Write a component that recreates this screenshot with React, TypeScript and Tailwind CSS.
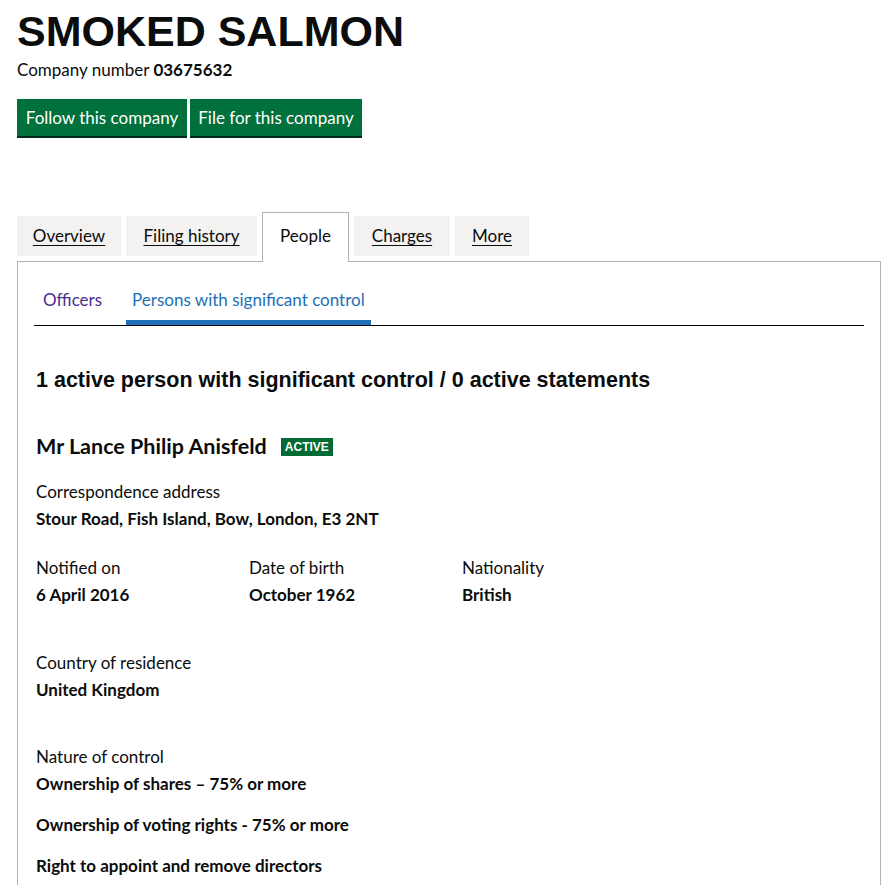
import React from "react";

const body = "font-['Lato','Liberation_Sans',sans-serif]";

const tabs = [
  { label: "Overview", w: "w-[104px]" },
  { label: "Filing history", w: "w-[131px]" },
  { label: "People", w: "w-[87px]", active: true },
  { label: "Charges", w: "w-[96px]" },
  { label: "More", w: "w-[74px]" },
];

const Field = ({ label, value }: { label: string; value: string }) => (
  <div>
    <div className="leading-5">{label}</div>
    <div className="mt-[7px] font-bold leading-5">{value}</div>
  </div>
);

export default function App() {
  return (
    <div className={`min-h-[885px] bg-white text-[#0b0c0c] ${body} text-[17px]`}>
      <div className="pl-[17px] pr-[14px]">
        {/* Header */}
        <h1 className="pt-[10px] font-['Liberation_Sans',Arial,sans-serif] text-[43px] font-bold leading-[42px]">
          SMOKED SALMON
        </h1>
        <p className="mt-[8px] leading-5">
          Company number <strong className="font-bold">03675632</strong>
        </p>

        {/* Actions */}
        <div className="mt-[19px] flex gap-[3px]">
          <button className="h-[37px] w-[170px] bg-[#00703c] text-white shadow-[0_2px_0_#002d18] leading-5">
            Follow this company
          </button>
          <button className="h-[37px] w-[172px] bg-[#00703c] text-white shadow-[0_2px_0_#002d18] leading-5">
            File for this company
          </button>
        </div>

        {/* Tabs */}
        <div className="mt-[76px] flex items-start gap-[5px]">
          {tabs.map((t) =>
            t.active ? (
              <div
                key={t.label}
                className={`${t.w} relative z-10 -mb-px flex h-[50px] items-center justify-center border border-b-0 border-[#b1b4b6] bg-white pb-[3px] leading-5`}
              >
                {t.label}
              </div>
            ) : (
              <a
                key={t.label}
                href="#"
                className={`${t.w} mt-[4px] flex h-[40px] items-center justify-center bg-[#f3f2f1] leading-5 underline underline-offset-[3px]`}
              >
                {t.label}
              </a>
            )
          )}
        </div>

        {/* Panel */}
        <div className="w-[864px] border border-[#b1b4b6] px-[16px] pt-[28px] pb-[40px]">
          <ul className="flex gap-[17px] border-b border-black">
            <li className="ml-[2px] px-[7px] pb-[15px] leading-5 text-[#4c2c92]">Officers</li>
            <li className="border-b-[5px] border-[#1d70b8] px-[6px] pb-[10px] leading-5 text-[#1d70b8]">
              Persons with significant control
            </li>
          </ul>

          <div className="pl-[2px]">
            <h2 className="mt-[42px] font-['Liberation_Sans',Arial,sans-serif] text-[21.5px] font-bold leading-[25px]">
              1 active person with significant control / 0 active statements
            </h2>

            <div className="mt-[41px] flex items-center gap-[14px]">
              <h3 className="text-[21.5px] font-bold leading-[25px]">Mr Lance Philip Anisfeld</h3>
              <span className="flex h-[18px] items-center bg-[#006b35] px-[4px] font-['Liberation_Sans',Arial,sans-serif] text-[12px] font-bold leading-none text-white">
                ACTIVE
              </span>
            </div>

            <div className="mt-[23px]">
              <Field label="Correspondence address" value="Stour Road, Fish Island, Bow, London, E3 2NT" />
            </div>

            <div className="mt-[29px] grid grid-cols-[213px_213px_213px]">
              <Field label="Notified on" value="6 April 2016" />
              <Field label="Date of birth" value="October 1962" />
              <Field label="Nationality" value="British" />
            </div>

            <div className="mt-[48px]">
              <Field label="Country of residence" value="United Kingdom" />
            </div>

            <div className="mt-[47px]">
              <div className="leading-5">Nature of control</div>
              <ul className="mt-[7px] flex flex-col gap-[21px] font-bold leading-5">
                <li>Ownership of shares – 75% or more</li>
                <li>Ownership of voting rights - 75% or more</li>
                <li>Right to appoint and remove directors</li>
              </ul>
            </div>
          </div>
        </div>
      </div>
    </div>
  );
}
